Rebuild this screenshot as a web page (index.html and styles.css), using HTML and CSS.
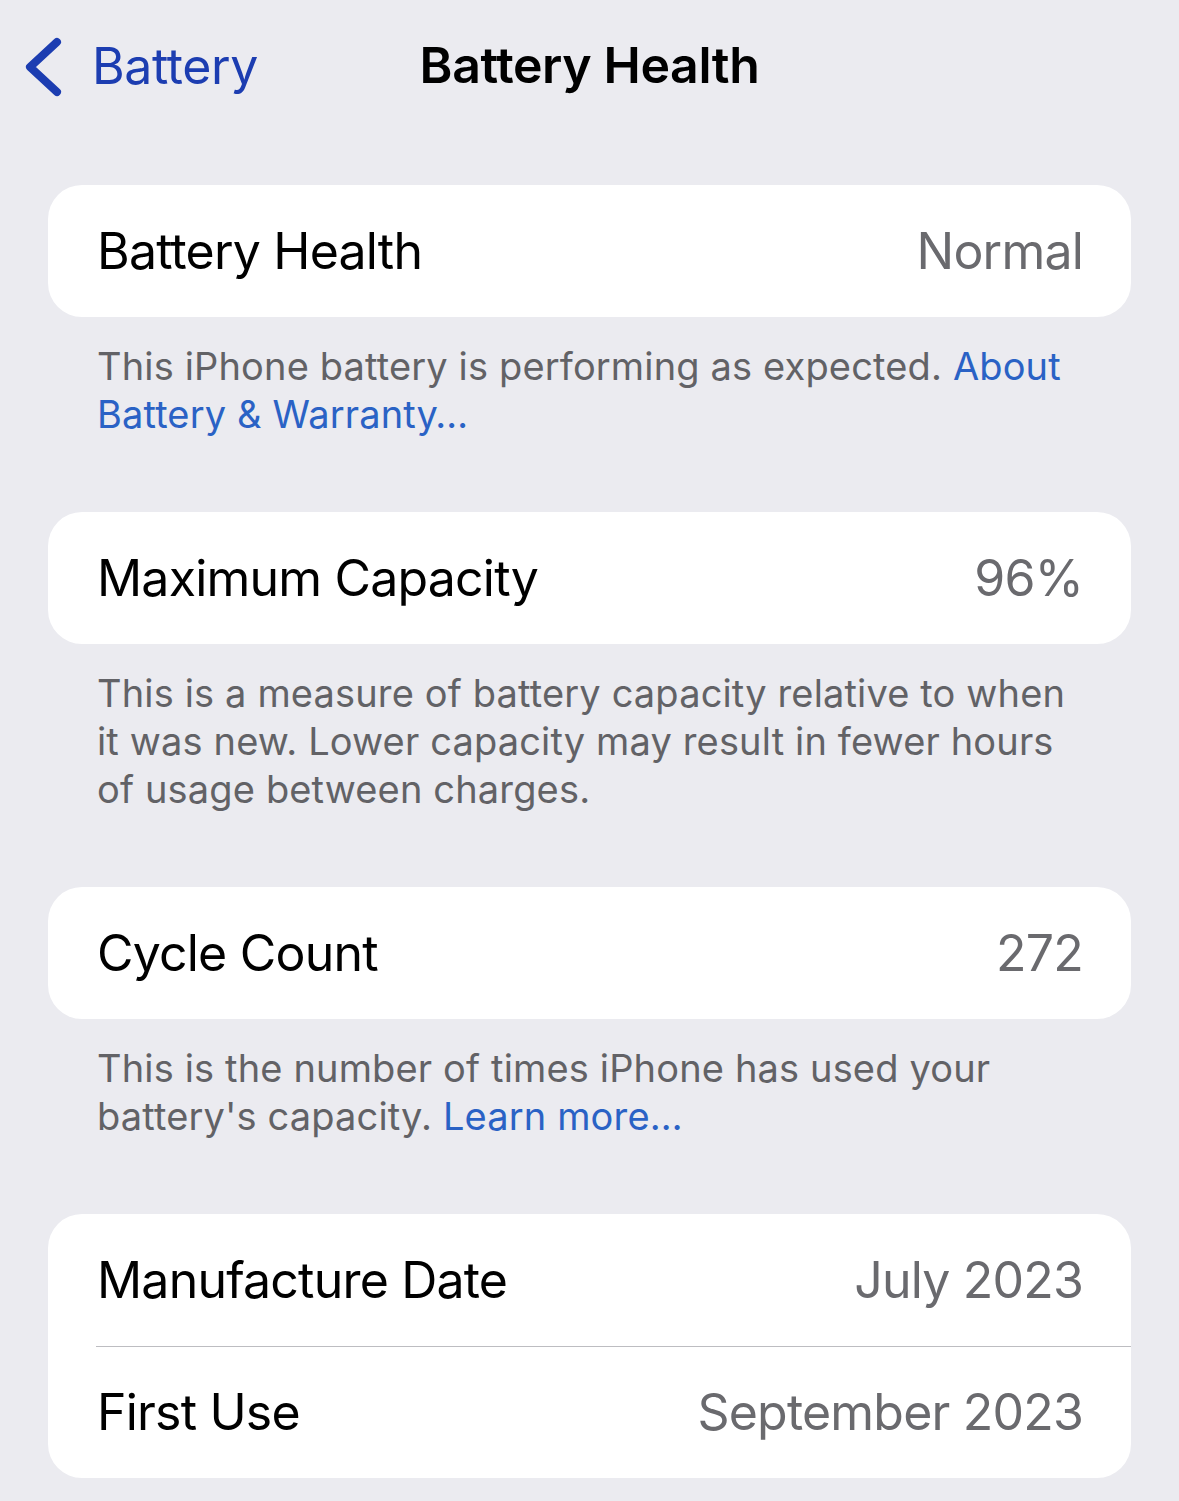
FILE: index.html
```html
<!DOCTYPE html>
<html lang="en">
<head>
    <meta charset="UTF-8">
    <meta name="viewport" content="width=device-width, initial-scale=1.0">
    <title>Battery Health</title>
    <link rel="stylesheet" href="styles.css">
</head>

<body>
    <header class="nav">
        <a class="back" href="#">
            <svg class="chevron" width="40" height="62" viewBox="0 0 40 62">
                <path d="M33 6 L6 31 L33 56" fill="none" stroke="currentColor" stroke-width="8" stroke-linecap="round" stroke-linejoin="round"/>
            </svg>
            <span>Battery</span>
        </a>
        <h1 class="title">Battery Health</h1>
    </header>

    <main>
        <section class="group">
            <div class="card">
                <div class="row">
                    <span class="label">Battery Health</span>
                    <span class="value">Normal</span>
                </div>
            </div>
            <p class="note">This iPhone battery is performing as expected. <a href="#">About Battery &amp; Warranty…</a></p>
        </section>

        <section class="group">
            <div class="card">
                <div class="row">
                    <span class="label">Maximum Capacity</span>
                    <span class="value">96%</span>
                </div>
            </div>
            <p class="note">This is a measure of battery capacity relative to when it was new. Lower capacity may result in fewer hours of usage between charges.</p>
        </section>

        <section class="group">
            <div class="card">
                <div class="row">
                    <span class="label">Cycle Count</span>
                    <span class="value">272</span>
                </div>
            </div>
            <p class="note">This is the number of times iPhone has used your battery's capacity. <a href="#">Learn more…</a></p>
        </section>

        <section class="group">
            <div class="card">
                <div class="row">
                    <span class="label">Manufacture Date</span>
                    <span class="value">July 2023</span>
                </div>
                <div class="row">
                    <span class="label">First Use</span>
                    <span class="value">September 2023</span>
                </div>
            </div>
        </section>
    </main>
</body>
</html>
```

FILE: styles.css
```css
body {
	font-family: Inter, "Noto Sans", sans-serif;
	margin: 0;
	padding: 0;
	background-color: #ebebf0;
	color: #000;
	letter-spacing: -0.4px;
}

a {
	text-decoration: none;
}

.nav {
	position: relative;
	height: 130px;
	display: flex;
	align-items: center;
	justify-content: center;
}

.back {
	position: absolute;
	left: 24px;
	top: 36px;
	display: flex;
	align-items: center;
	gap: 28px;
	color: #1c3db1;
	font-size: 50px;
}

.back span {
	line-height: 60px;
	margin-top: -2px;
}

.title {
	margin: 0;
	font-size: 50px;
	font-weight: 600;
	line-height: 60px;
}

main {
	padding: 55px 48px 0 48px;
}

.group {
	margin-bottom: 74px;
}

.card {
	background-color: #fff;
	border-radius: 34px;
	overflow: hidden;
}

.row {
	height: 132px;
	display: flex;
	align-items: center;
	justify-content: space-between;
	padding: 0 48px 0 49px;
	font-size: 50px;
	letter-spacing: -0.8px;
}

.row + .row {
	position: relative;
}

.row + .row::before {
	content: "";
	position: absolute;
	top: 0;
	left: 48px;
	right: 0;
	height: 1px;
	background-color: #bdbdc1;
}

.value {
	color: #6a6a6e;
}

.note {
	margin: 0;
	padding: 25px 48px 0 49px;
	font-size: 38px;
	line-height: 48px;
	letter-spacing: 0.15px;
	color: #626266;
}

.note a {
	color: #2a62c5;
}
```
